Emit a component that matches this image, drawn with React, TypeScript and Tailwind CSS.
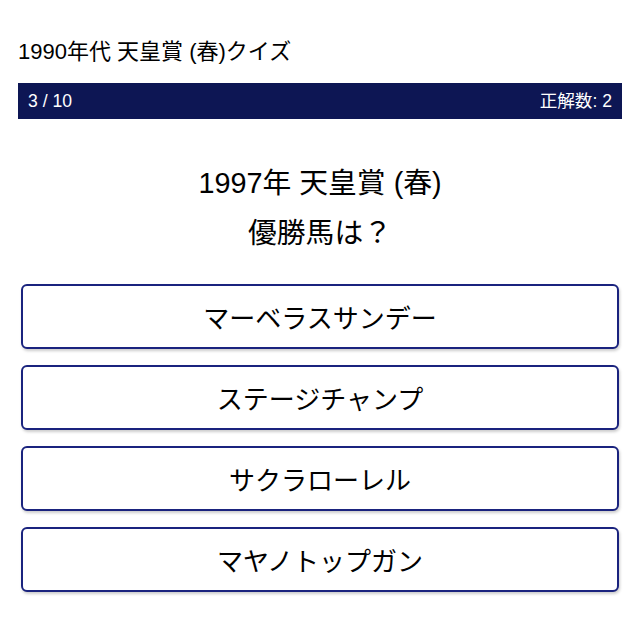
import React from 'react';

const choices = ['マーベラスサンデー', 'ステージチャンプ', 'サクラローレル', 'マヤノトップガン'];

const App = () => {
  return (
    <div
      className="w-[640px] h-[640px] bg-white px-[18px] text-black"
      style={{ fontFamily: '"Liberation Sans", Arial, "Noto Sans CJK JP", sans-serif' }}
    >
      <h1 className="pt-[38px] text-[22px] leading-[28px] font-normal">1990年代 天皇賞 (春)クイズ</h1>

      <div className="mt-[17px] h-[36px] bg-[#0d1654] text-white text-[17.6px] flex items-center justify-between px-[10px]">
        <span>3 / 10</span>
        <span>正解数: 2</span>
      </div>

      <div className="mt-[39px] text-center text-[28.8px] leading-[50px]">
        <div>1997年 天皇賞 (春)</div>
        <div>優勝馬は？</div>
      </div>

      <div className="mt-[26px] flex flex-col gap-[16px] px-[3px]">
        {choices.map((c) => (
          <button
            key={c}
            className="h-[65px] w-full pt-[5px] rounded-[6px] border-2 border-[#1a237e] bg-white text-[26px] shadow-[1px_2px_3px_rgba(0,0,0,0.2)]"
          >
            {c}
          </button>
        ))}
      </div>
    </div>
  );
};

export default App;
